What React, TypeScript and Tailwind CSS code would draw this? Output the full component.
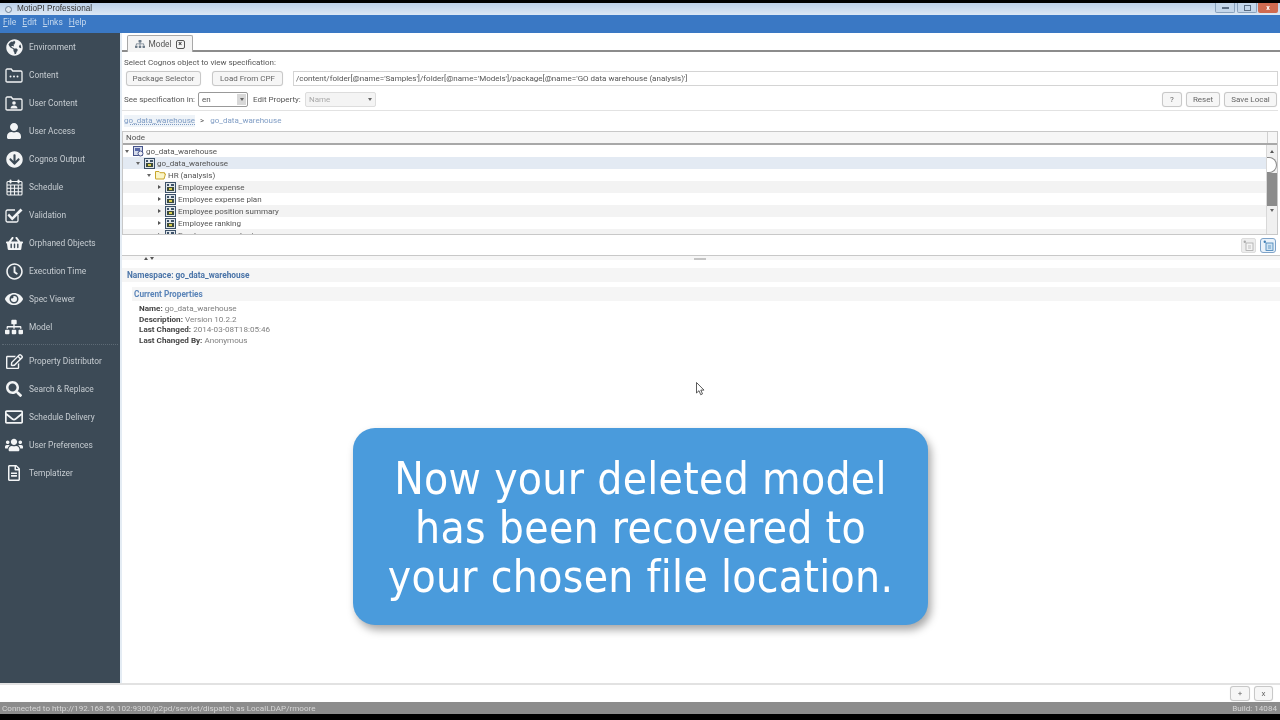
import React from "react";
import {
  FaGlobeAmericas, FaUser, FaArrowCircleDown, FaShoppingBasket, FaRegClock, FaEye, FaSitemap,
  FaRegEdit, FaSearch, FaRegEnvelope, FaUsers, FaRegFileAlt,
} from "react-icons/fa";

const FolderDots = () => (
  <svg width="18" height="15" viewBox="0 0 18 15" fill="none" stroke="#f2f4f5" strokeWidth="1.3">
    <path d="M1 13V2.2C1 1.5 1.5 1 2.2 1h4l1.6 2h8c.7 0 1.2.5 1.2 1.2V13c0 .6-.5 1-1.2 1H2.2C1.5 14 1 13.600 1 13z" />
    <circle cx="5.500" cy="8.500" r="1" fill="#f2f4f5" stroke="none" />
    <circle cx="9" cy="8.500" r="1" fill="#f2f4f5" stroke="none" />
    <circle cx="12.500" cy="8.500" r="1" fill="#f2f4f5" stroke="none" />
  </svg>
);
const FolderUser = () => (
  <svg width="18" height="15" viewBox="0 0 18 15" fill="none" stroke="#f2f4f5" strokeWidth="1.3">
    <path d="M1 13V2.2C1 1.5 1.500 1 2.200 1h4l1.600 2h8c.7 0 1.200.5 1.200 1.200V13c0 .6-.5 1-1.200 1H2.200C1.500 14 1 13.600 1 13z" />
    <circle cx="9" cy="7" r="1.800" fill="#f2f4f5" stroke="none" />
    <path d="M5.500 12.500c0-2 1.500-3 3.500-3s3.500 1 3.500 3z" fill="#f2f4f5" stroke="none" />
  </svg>
);
const CheckBox = () => (
  <svg width="18" height="16" viewBox="0 0 18 16" fill="none">
    <path d="M13 8v5.500c0 .8-.6 1.500-1.500 1.500h-9C1.700 15 1 14.300 1 13.500v-9C1 3.700 1.700 3 2.500 3H10" stroke="#f2f4f5" strokeWidth="1.300" />
    <path d="M4 6.500l3.200 3.500L15.500 1.500l2 2L7.200 13.500 2.500 8.500z" fill="#f2f4f5" />
  </svg>
);
const Calendar = () => (
  <svg width="17" height="17" viewBox="0 0 17 17" fill="none" stroke="#f2f4f5" strokeWidth="1.1">
    <rect x="1" y="2.500" width="15" height="13.500" rx="1" />
    <path d="M1 6h15M1 9.300h15M1 12.700h15M4.700 6v10M8.500 6v10M12.300 6v10" />
    <rect x="3.500" y="0.500" width="2" height="4" rx="1" fill="#f2f4f5" stroke="none" />
    <rect x="11.500" y="0.500" width="2" height="4" rx="1" fill="#f2f4f5" stroke="none" />
  </svg>
);

const cls = "text-[#f2f4f5]";
const top = [
  { l: "Environment", i: <FaGlobeAmericas size={17} className={cls} /> },
  { l: "Content", i: <FolderDots /> },
  { l: "User Content", i: <FolderUser /> },
  { l: "User Access", i: <FaUser size={16} className={cls} /> },
  { l: "Cognos Output", i: <FaArrowCircleDown size={17} className={cls} /> },
  { l: "Schedule", i: <Calendar /> },
  { l: "Validation", i: <CheckBox /> },
  { l: "Orphaned Objects", i: <FaShoppingBasket size={17} className={cls} /> },
  { l: "Execution Time", i: <FaRegClock size={17} className={cls} /> },
  { l: "Spec Viewer", i: <FaEye size={18} className={cls} /> },
  { l: "Model", i: <FaSitemap size={18} className={cls} /> },
];
const bottom = [
  { l: "Property Distributor", i: <FaRegEdit size={17} className={cls} /> },
  { l: "Search & Replace", i: <FaSearch size={16} className={cls} /> },
  { l: "Schedule Delivery", i: <FaRegEnvelope size={18} className={cls} /> },
  { l: "User Preferences", i: <FaUsers size={18} className={cls} /> },
  { l: "Templatizer", i: <FaRegFileAlt size={16} className={cls} /> },
];

const NavItem = ({ l, i }: { l: string; i: React.ReactNode }) => (
  <div className="flex h-7 items-center">
    <div className="flex w-[29px] shrink-0 items-center justify-center pr-[1px]">{i}</div>
    <span className="text-[8.400px] text-[#c6ccd1] whitespace-nowrap">{l}</span>
  </div>
);

const Btn = ({ children, w }: { children: React.ReactNode; w: string }) => (
  <div className={`${w} flex h-[15px] items-center justify-center rounded-[3px] border border-[#c8c8c8] bg-[#f6f6f6] text-[8px] text-[#666] whitespace-nowrap shadow-[0_0_1px_rgba(0,0,0,0.15)]`}>
    {children}
  </div>
);

const ModelIcon = () => (
  <svg width="11" height="11" viewBox="0 0 11 11">
    <rect x="0.500" y="0.500" width="10" height="10" fill="#dfe5ea" stroke="#3d5269" />
    <rect x="2" y="2" width="2" height="2" fill="#3d5269" />
    <rect x="6" y="2" width="3" height="2" fill="#3d5269" />
    <rect x="2" y="5" width="7" height="4" fill="#3d4a3a" />
    <rect x="4" y="6" width="3" height="2" fill="#d8cd4a" />
  </svg>
);
const PkgIcon = () => (
  <svg width="11" height="11" viewBox="0 0 11 11">
    <rect x="0.500" y="0.500" width="9" height="9" fill="#d5dcec" stroke="#47548a" />
    <rect x="2" y="2" width="5" height="3" fill="#5a6aa8" />
    <circle cx="7.500" cy="7.500" r="2.500" fill="#eef0f6" stroke="#47548a" />
  </svg>
);
const FolderIcon = () => (
  <svg width="11" height="10" viewBox="0 0 11 10">
    <path d="M.5 8.800V1.500h3.500l1 1.200h4.500v1.200H10.500L9 9H.8z" fill="#fbf6c8" stroke="#c9a52a" />
  </svg>
);
const DocIcon = ({ c, f }: { c: string; f: string }) => (
  <svg width="11" height="11" viewBox="0 0 11 11" fill="none">
    <rect x="3" y="3" width="7" height="7.500" fill={f} stroke={c} strokeWidth="0.800" />
    <path d="M5 6h3M5 8h3" stroke={c} strokeWidth="0.700" />
    <circle cx="1.800" cy="1.800" r="1.200" fill={c} />
  </svg>
);
const Down = () => <span className="h-0 w-0 border-x-[2.500px] border-t-[3px] border-x-transparent border-t-[#666]" />;
const Right = () => <span className="h-0 w-0 border-y-[2.500px] border-l-[3px] border-y-transparent border-l-[#555]" />;

const rows = [
  { x: "pl-[1px]", a: <Down />, ic: <PkgIcon />, t: "go_data_warehouse", bg: "" },
  { x: "pl-[12px]", a: <Down />, ic: <ModelIcon />, t: "go_data_warehouse", bg: "bg-[#e3eaf3]" },
  { x: "pl-[23px]", a: <Down />, ic: <FolderIcon />, t: "HR (analysis)", bg: "" },
  { x: "pl-[33px]", a: <Right />, ic: <ModelIcon />, t: "Employee expense", bg: "bg-[#f3f3f3]" },
  { x: "pl-[33px]", a: <Right />, ic: <ModelIcon />, t: "Employee expense plan", bg: "" },
  { x: "pl-[33px]", a: <Right />, ic: <ModelIcon />, t: "Employee position summary", bg: "bg-[#f3f3f3]" },
  { x: "pl-[33px]", a: <Right />, ic: <ModelIcon />, t: "Employee ranking", bg: "" },
  { x: "pl-[33px]", a: <Right />, ic: <ModelIcon />, t: "Employee survey topic", bg: "bg-[#f3f3f3]" },
];

const Prop = ({ k, v }: { k: string; v: string }) => (
  <div className="h-[10.700px] leading-[10.700px] whitespace-nowrap">
    <span className="font-bold text-[#444]">{k}</span> <span className="text-[#808080]">{v}</span>
  </div>
);

const Mn = ({ a, b }: { a: string; b: string }) => (
  <span><span className="underline">{a}</span>{b}</span>
);

export default function App() {
  return (
    <div className="relative flex h-[720px] w-[1280px] flex-col overflow-hidden bg-white font-['Roboto',sans-serif] blur-[0.3px]">
      <div className="h-[3px] shrink-0 bg-black" />
      <div className="flex h-3 shrink-0 items-center bg-gradient-to-b from-[#bcd0e8] to-[#dce8f5] pl-[5px]">
        <span className="mr-[5px] h-[7px] w-[7px] rounded-full border border-[#6d7f93] bg-[#dfe7ef]" />
        <span className="text-[8.200px] text-[#333] font-['Liberation_Sans',sans-serif]">MotioPI Professional</span>
        <div className="ml-auto flex h-full items-start">
          <div className="flex h-[10px] w-[20px] items-center justify-center rounded-b-[2px] border border-t-0 border-[#8aa2bd] bg-[#c4d6ea]">
            <span className="h-[2px] w-[7px] border border-[#5b6d82] bg-white" />
          </div>
          <div className="ml-[2px] flex h-[10px] w-[20px] items-center justify-center rounded-b-[2px] border border-t-0 border-[#8aa2bd] bg-[#c4d6ea]">
            <span className="h-[6px] w-[7px] border border-[#5b6d82]" />
          </div>
          <div className="mr-[2px] ml-[1px] flex h-[10px] w-[20px] items-center justify-center rounded-b-[2px] bg-[#cf6a50] text-[7px] font-bold leading-none text-white">x</div>
        </div>
      </div>
      <div className="flex h-[18px] shrink-0 items-center gap-[6px] bg-[#3a78c4] pb-[4px] pl-[3px] text-[8.500px] text-[#c4d8ee]">
        <Mn a="F" b="ile" />
        <Mn a="E" b="dit" />
        <Mn a="L" b="inks" />
        <Mn a="H" b="elp" />
      </div>

      <div className="flex min-h-0 flex-1">
        <aside className="w-[120px] shrink-0 bg-[#3c4a56]">
          {top.map((n) => <NavItem key={n.l} {...n} />)}
          <div className="mx-[2px] mt-[3px] mb-[2px] h-0 border-t border-dotted border-[#5d6a75]" />
          {bottom.map((n) => <NavItem key={n.l} {...n} />)}
        </aside>

        <main className="flex min-w-0 flex-1 flex-col border-l-2 border-[#e4ecf4]">
          <div className="flex h-[19px] shrink-0 items-end border-b-2 border-[#8c8c8c] pl-[5px]">
            <div className="-mb-[2px] flex h-[17px] w-[66px] items-center justify-center gap-[3px] rounded-t-[2px] border border-b-0 border-[#a8a8a8] bg-[#f4f4f4] text-[8.300px] text-[#555]">
              <FaSitemap size={10} className="text-[#6b7a88]" />
              <span>Model</span>
              <span className="ml-[1px] flex h-[9px] w-[9px] items-center justify-center rounded-[2px] border border-[#555] text-[7px] font-bold leading-none text-[#333]">×</span>
            </div>
          </div>

          <div className="flex h-[19px] shrink-0 items-end pb-[2px] pl-[2px] text-[8px] leading-[13px] text-[#555]">Select Cognos object to view specification:</div>

          <div className="flex h-[15px] shrink-0 items-stretch pl-[4px] pr-[2px]">
            <Btn w="w-[75px]">Package Selector</Btn>
            <div className="w-[11px]" />
            <Btn w="w-[71px]">Load From CPF</Btn>
            <div className="ml-[10px] flex flex-1 items-center border border-[#d4d4d4] pl-[2px] text-[8px] text-[#555] whitespace-nowrap">
              /content/folder[@name='Samples']/folder[@name='Models']/package[@name='GO data warehouse (analysis)']
            </div>
          </div>

          <div className="mt-[6px] flex h-[15px] shrink-0 items-center pl-[2px] pr-[3px] text-[8px] text-[#555]">
            <span className="w-[74px]">See specification in:</span>
            <div className="flex h-full w-[50px] items-center justify-between rounded-[2px] border border-[#999] bg-white pl-[3px] pr-[1px]">
              <span>en</span>
              <span className="flex h-[11px] w-[9px] items-center justify-center bg-[#d8d8d8]"><Down /></span>
            </div>
            <span className="ml-[5px] w-[52px]">Edit Property:</span>
            <div className="flex h-full w-[71px] items-center justify-between rounded-[2px] border border-[#ddd] bg-[#f4f4f4] pl-[3px] pr-[3px] text-[#aaa]">
              <span>Name</span>
              <Down />
            </div>
            <div className="ml-auto flex gap-[4px]">
              <Btn w="w-[20px]">?</Btn>
              <Btn w="w-[34px]">Reset</Btn>
              <Btn w="w-[53px]">Save Local</Btn>
            </div>
          </div>

          <div className="mt-[3px] mr-[2px] h-[1px] shrink-0 bg-[#e2e2e2]" />

          <div className="flex h-[20px] shrink-0 items-center pl-[2px] text-[8px] text-[#7f9cc4]">
            <span className="bg-[#eef3f8] underline decoration-dotted">go_data_warehouse</span>
            <span className="ml-[5px] mr-[6px] text-[#555]">&gt;</span>
            <span>go_data_warehouse</span>
          </div>

          <div className="mr-[2px] flex h-[104px] shrink-0 flex-col border border-[#c8c8c8]">
            <div className="flex h-[13px] shrink-0 items-center border-b-2 border-[#a8a8a8] bg-[#f6f6f6] pl-[3px] text-[8px] text-[#555]">
              Node
              <div className="ml-auto h-full w-[10px] border-l border-[#d0d0d0]" />
            </div>
            <div className="flex min-h-0 flex-1">
              <div className="min-w-0 flex-1 overflow-hidden">
                {rows.map((r, i) => (
                  <div key={i} className={`flex h-3 items-center ${r.x} ${r.bg} text-[8px] text-[#555]`}>
                    <span className="flex w-[6px] justify-center">{r.a}</span>
                    <span className="ml-[3px] flex w-[11px] justify-center">{r.ic}</span>
                    <span className="ml-[2px] whitespace-nowrap pt-[1px]">{r.t}</span>
                  </div>
                ))}
              </div>
              <div className="flex w-[11px] shrink-0 flex-col items-center border-l border-[#d8d8d8] bg-[#f0f0f0]">
                <span className="mt-[5px] h-0 w-0 border-x-[2.500px] border-b-[3px] border-x-transparent border-b-[#555]" />
                <div className="mt-[4px] h-[21px] w-full rounded-r-full border border-l-0 border-[#888] bg-white" />
                <div className="h-[44px] w-full bg-[#8b8b8b]" />
                <span className="mt-[4px]"><Down /></span>
              </div>
            </div>
          </div>

          <div className="flex h-[20px] shrink-0 items-center justify-end gap-[4px] pr-[4px]">
            <div className="flex h-[15px] w-[15px] items-center justify-center rounded-[2px] border border-[#ddd] bg-[#ededed]">
              <DocIcon c="#aaaaaa" f="#f4f4f4" />
            </div>
            <div className="flex h-[15px] w-[16px] items-center justify-center rounded-[3px] border border-[#7ea3c9] bg-[#eaf2fa]">
              <DocIcon c="#3f7fb5" f="#cfe3f3" />
            </div>
          </div>

          <div className="relative flex h-[5px] shrink-0 items-center border-t border-[#c8c8c8] bg-[#f6f6f6] pt-[1px]">
            <span className="ml-[22px] h-0 w-0 border-x-[2.500px] border-b-[3px] border-x-transparent border-b-[#555]" />
            <span className="ml-[2px] h-0 w-0 border-x-[2.500px] border-t-[3px] border-x-transparent border-t-[#555]" />
            <span className="ml-[540px] h-[2px] w-[12px] bg-[#c4c4c4]" />
          </div>

          <div className="mt-[8px] flex h-[14px] shrink-0 items-center bg-[#f5f5f5] pl-[5px] text-[8.300px] font-bold text-[#4a74a8]">Namespace: go_data_warehouse</div>
          <div className="mt-[5px] ml-[10px] flex h-[14px] shrink-0 items-center bg-[#f5f5f5] pl-[2px] text-[8.250px] font-bold text-[#5a84b8]">Current Properties</div>
          <div className="mt-[2px] ml-[17px] text-[8.100px]">
            <Prop k="Name:" v="go_data_warehouse" />
            <Prop k="Description:" v="Version 10.2.2" />
            <Prop k="Last Changed:" v="2014-03-08T18:05:46" />
            <Prop k="Last Changed By:" v="Anonymous" />
          </div>
        </main>
      </div>

      <div className="flex h-[19px] shrink-0 items-center justify-end gap-[4px] border-t-2 border-[#e2e2e2] pr-[7px]">
        <Btn w="w-[20px]">+</Btn>
        <Btn w="w-[19px]">x</Btn>
      </div>
      <div className="flex h-3 shrink-0 items-center justify-between bg-[#8c8c8c] pl-[2px] pr-[3px] text-[8.100px] text-[#d6d6d6]">
        <span>Connected to http://192.168.56.102:9300/p2pd/servlet/dispatch as LocalLDAP/rmoore</span>
        <span>Build: 14084</span>
      </div>
      <div className="h-[6px] shrink-0 bg-black" />

      <div className="absolute top-[428px] left-[353px] flex h-[197px] w-[575px] flex-col items-center justify-center rounded-[22px] bg-[#4a9bdc] pt-[1px] font-['DejaVu_Sans_Condensed','DejaVu_Sans',sans-serif] text-[44px] leading-[49px] text-white shadow-[3px_5px_9px_rgba(0,0,0,0.35)]">
        <div className="whitespace-nowrap tracking-[0.300px]">Now your deleted model</div>
        <div className="whitespace-nowrap tracking-[0.300px]">has been recovered to</div>
        <div className="whitespace-nowrap tracking-[0.300px]">your chosen file location.</div>
      </div>

      <svg className="absolute top-[382px] left-[696px]" width="9" height="14" viewBox="0 0 9 14">
        <path d="M.5.5v10.500l2.500-2.300 1.700 4 1.800-.8-1.700-3.800H8z" fill="#fff" stroke="#333" strokeWidth="0.8" />
      </svg>
    </div>
  );
}
